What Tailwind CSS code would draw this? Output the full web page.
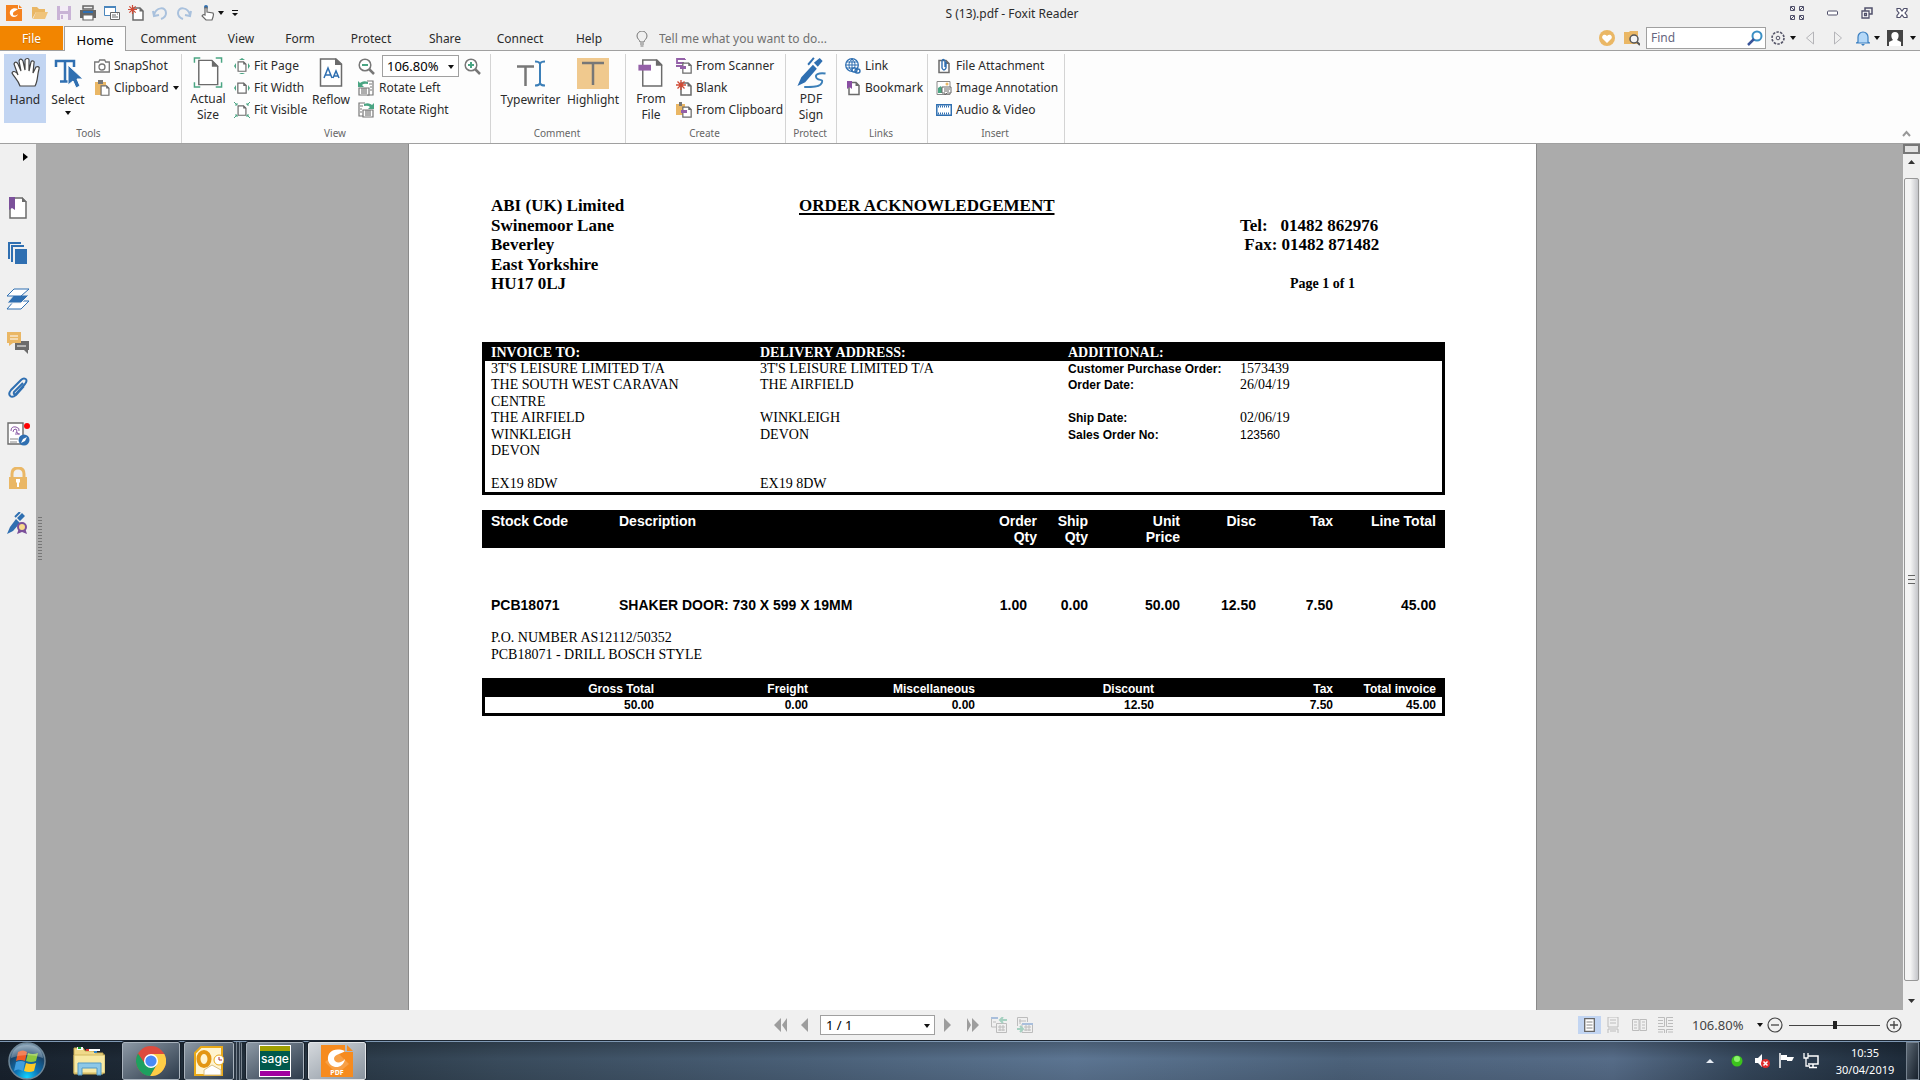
<!DOCTYPE html>
<html lang="en">
<head>
<meta charset="utf-8">
<meta name="viewport" content="width=device-width, initial-scale=1">
<title>S (13).pdf - Foxit Reader</title>
<script src="https://cdn.jsdelivr.net/npm/@tailwindcss/browser@4"></script>
</head>
<body class="flex h-screen flex-col overflow-hidden bg-[#f0f0f0] font-['Noto_Sans',sans-serif] text-[12px] leading-4 text-[#2b2b2b]">

<!-- Reusable symbols -->
<svg class="hidden" aria-hidden="true">
  <symbol id="caret" viewBox="0 0 6 4"><path d="M0 0h6L3 4z" fill="#111"/></symbol>
  <symbol id="sheet" viewBox="0 0 12 14"><path d="M1 1h7l3 3v9H1z" fill="#fff" stroke="#6b6b6b" stroke-width="1.5"/><path d="M7.500 .5L11.500 4.500h-4z" fill="#6b6b6b"/></symbol>
  <symbol id="burst" viewBox="0 0 10 10"><path d="M5 0v10M0 5h10M1.500 1.500l7 7M8.500 1.500l-7 7" stroke="#d04a35" stroke-width="1.300"/></symbol>
</svg>

<!-- Title bar -->
<header class="flex h-[26px] shrink-0 items-center">
  <div class="flex w-[240px] shrink-0 items-center gap-2 pl-[6px] [&>*]:shrink-0">
    <svg class="size-4" viewBox="0 0 16 16"><path d="M0 0h12v4h4v12H0z" fill="#f5821f"/><path d="M13 0l3 3h-3z" fill="#f5821f"/><path d="M12 4C7 2 3 5 4 9c1 4 7 4 8 0-2 2-5 2-5 0 0-3 3-3 5-5z" fill="#fff"/></svg>
    <button aria-label="Open" class="pl-[2px]"><svg class="size-4" viewBox="0 0 16 16"><path d="M0 2h5l2 2h6v3H4L0 14z" fill="#eab765"/><path d="M4 7h12l-3 7H1z" fill="#f0c47c"/></svg></button>
    <button aria-label="Save"><svg class="size-4" viewBox="0 0 16 16"><path d="M1 1h14v14H1z" fill="#c9b3d6"/><path d="M4 1h8v5H4zM4 9h8v6H4z" fill="#f3edf6"/><path d="M5 10h2v4H5z" fill="#c9b3d6"/></svg></button>
    <button aria-label="Print"><svg class="size-4" viewBox="0 0 16 16"><path d="M3 1h10v3H3z" fill="none" stroke="#666" stroke-width="1.500"/><path d="M0 5h16v8H0z" fill="#666"/><path d="M3 7h10" stroke="#2f6fb1" stroke-width="2"/><path d="M3 10h10v5H3z" fill="#fff" stroke="#666" stroke-width="1.200"/></svg></button>
    <button aria-label="Email"><svg class="size-4" viewBox="0 0 16 16"><path d="M.5 1.500h11v9H.5z" fill="#fff" stroke="#4a86bd"/><path d="M0 1h12v2H0z" fill="#4a86bd"/><path d="M6.500 7.500h9v7h-9z" fill="#fff" stroke="#666"/><path d="M8 10h4M8 12h6M13 9h1" stroke="#666"/></svg></button>
    <button aria-label="New"><svg class="size-4" viewBox="0 0 16 16"><use href="#sheet" x="4" y="2" width="12" height="14"/><use href="#burst" width="9" height="9"/></svg></button>
    <button aria-label="Undo"><svg class="size-4" viewBox="0 0 16 16"><path d="M1 6l1 5 5-1M2 10C4 2 14 1 14 8c0 3-2 5-5 6" fill="none" stroke="#a9c1dd" stroke-width="2"/></svg></button>
    <button aria-label="Redo"><svg class="size-4" viewBox="0 0 16 16"><path d="M15 6l-1 5-5-1M14 10C12 2 2 1 2 8c0 3 2 5 5 6" fill="none" stroke="#a9c1dd" stroke-width="2"/></svg></button>
    <button aria-label="Touch mode" class="flex items-center gap-[2px]"><svg class="size-4" viewBox="0 0 16 16"><circle cx="6" cy="2" r="2" fill="#2f6fb1"/><path d="M5 10V3q1-1 2 0v4l6 1q1 1 0 4l-1 3H6L2 11q1-2 3-1z" fill="#fff" stroke="#666" stroke-width="1.200"/></svg><svg class="h-[4px] w-[6px]"><use href="#caret"/></svg></button>
    <button aria-label="Customize"><svg class="h-[6px] w-[6px]" viewBox="0 0 6 6"><path d="M0 0h6v1H0zM0 3h6L3 6z" fill="#111"/></svg></button>
  </div>
  <h1 class="min-w-0 grow pt-px text-center">S (13).pdf - Foxit Reader</h1>
  <div class="flex w-[136px] shrink-0 items-center justify-between pr-[12px] pl-[6px]">
    <button aria-label="Full screen"><svg class="h-[14px] w-[14px]" viewBox="0 0 14 14"><path d="M.5.5h4v4h-4zM9.500.5h4v4h-4zM.5 9.500h4v4h-4zM9.500 9.500h4v4h-4zM1 1l3 3M13 1l-3 3M13 13l-3-3M1 13l3-3" fill="none" stroke="#50506b"/></svg></button>
    <button aria-label="Minimize"><svg class="h-[14px] w-[12px]" viewBox="0 0 12 14"><rect x=".5" y="5" width="10" height="4" rx="1" fill="#fff" stroke="#50506b"/></svg></button>
    <button aria-label="Restore"><svg class="h-[12px] w-[12px]" viewBox="0 0 12 12"><path d="M4 4V1h7v6H8" fill="none" stroke="#50506b" stroke-width="1.500"/><path d="M1 4h7v7H1zM3.500 6.500h2v2h-2z" fill="#fff" stroke="#50506b" stroke-width="1.300"/></svg></button>
    <button aria-label="Close"><svg class="h-[12px] w-[12px]" viewBox="0 0 12 12"><path d="M1 1.500h3l2 2.500 2-2.500h3v2L9 6l2 2.500v2H8L6 8l-2 2.500H1v-2L3 6 1 3.500z" fill="#fff" stroke="#50506b" stroke-width="1.200"/></svg></button>
  </div>
</header>

<!-- Ribbon tabs -->
<nav class="flex h-[25px] shrink-0 border-b border-[#a0a0a0]">
  <button class="mr-px w-[63px] bg-[#f28500] pt-[2px] text-white text-shadow-xs">File</button>
  <button class="z-10 -mb-px w-[62px] border border-b-0 border-[#a0a0a0] bg-[#fdfdfd] pt-px text-[13px] text-black">Home</button>
  <button class="w-[85px] pt-[2px]">Comment</button>
  <button class="w-[60px] pt-[2px]">View</button>
  <button class="w-[58px] pt-[2px]">Form</button>
  <button class="w-[84px] pt-[2px]">Protect</button>
  <button class="w-[64px] pt-[2px]">Share</button>
  <button class="w-[86px] pt-[2px]">Connect</button>
  <button class="w-[52px] pt-[2px]">Help</button>
  <label class="ml-[21px] flex items-center gap-[11px] pt-[2px]">
    <svg class="h-4 w-3" viewBox="0 0 12 16"><path d="M4 11c0-2-3-3-3-6a5 5 0 0 1 10 0c0 3-3 4-3 6zM4 13h4M4.500 15h3" fill="none" stroke="#777"/></svg>
    <input class="w-[200px] bg-transparent outline-none placeholder:text-[#707070]" placeholder="Tell me what you want to do..." aria-label="Tell me what you want to do">
  </label>
  <div class="ml-auto flex shrink-0 items-center pr-[4px]">
    <button aria-label="Favorites" class="mr-[9px]"><svg class="size-4" viewBox="0 0 16 16"><circle cx="8" cy="8" r="8" fill="#eab765"/><path d="M8 13L3.500 8.500C2 6 5.500 3 8 6c2.500-3 6 0 4.500 2.500z" fill="#fff"/></svg></button>
    <button aria-label="Search folder" class="mr-[6px]"><svg class="size-4" viewBox="0 0 16 16"><path d="M0 2h5l1-1h8v13H0z" fill="#eab765"/><circle cx="10" cy="9" r="4" fill="#f4f4f4" stroke="#555" stroke-width="1.500"/><path d="M13 12l3 3" stroke="#555" stroke-width="2"/></svg></button>
    <label class="mr-[5px] flex h-[22px] w-[120px] items-center border border-[#a0a0a0] bg-white pr-[2px] pl-1">
      <input class="min-w-0 grow outline-none placeholder:text-[#666680]" placeholder="Find" aria-label="Find">
      <svg class="size-4 shrink-0" viewBox="0 0 16 16"><circle cx="10" cy="6" r="4.500" fill="#fff" stroke="#3a8fc4" stroke-width="2"/><path d="M7 9l-6 6" stroke="#3a559a" stroke-width="2.500"/></svg>
    </label>
    <button aria-label="Settings" class="mr-[10px] flex items-center gap-[5px]"><svg class="size-[14px]" viewBox="0 0 14 14"><circle cx="7" cy="7" r="6" fill="none" stroke="#555568" stroke-width="1.600" stroke-dasharray="2.500 1.200"/><circle cx="7" cy="7" r="1.800" fill="none" stroke="#555568"/></svg><svg class="h-[4px] w-[6px]"><use href="#caret"/></svg></button>
    <button aria-label="Previous" class="mr-5"><svg class="h-[14px] w-2" viewBox="0 0 8 14"><path d="M7.500 1v12L.5 7z" fill="none" stroke="#b4b4b8"/></svg></button>
    <button aria-label="Next" class="mr-[14px]"><svg class="h-[14px] w-2" viewBox="0 0 8 14"><path d="M.5 1v12l7-6z" fill="none" stroke="#b4b4b8"/></svg></button>
    <button aria-label="Notifications" class="mr-[7px] flex items-center gap-1"><svg class="h-4 w-[14px]" viewBox="0 0 14 16"><path d="M2 12V7a5 5 0 0 1 10 0v5l1.500 1H.5z" fill="#b4d8f8" stroke="#3b7fc0" stroke-width="1.200"/><path d="M5 14h4l-2 2z" fill="#3b7fc0"/></svg><svg class="h-[4px] w-[6px]"><use href="#caret"/></svg></button>
    <button aria-label="Account" class="flex items-center gap-[7px]"><svg class="size-4" viewBox="0 0 16 16"><path d="M0 0h16v16H0z" fill="#444"/><path d="M8 2c5 0 4 6 2 8l4 2v4H2v-4l4-2C4 8 3 2 8 2z" fill="#fff"/></svg><svg class="h-[4px] w-[6px]"><use href="#caret"/></svg></button>
  </div>
</nav>

<!-- Ribbon -->
<section class="flex h-[93px] shrink-0 border-b border-[#a0a0a0] bg-[#fdfdfd] pt-[3px]">
  <div class="w-[182px] shrink-0 border-r border-[#d4d4d4]">
    <div class="flex h-[69px]">
      <button class="ml-1 flex w-[42px] flex-col items-center gap-[3px] bg-[#c2d5f2] pt-[3px]">
        <svg class="size-8" viewBox="0 0 32 32"><path d="M11 29C9 23 5 20 3 16c1-3 5-1 6 2L5 7c1-3 3-2 4 0l3 7-2-10c1-3 3-2 4 0l2 9V3c1-2 4-2 4 0v11l2-9c1-2 4-1 3 1l-1 10 1-2 2-4c2-1 4 0 3 2-2 7-1 12-4 17z" fill="#fff" stroke="#444" stroke-width="1.200"/></svg>
        <span>Hand</span></button>
      <button class="ml-px flex w-[42px] flex-col items-center gap-[3px] pt-[3px]">
        <svg class="size-8" viewBox="0 0 32 32"><path d="M4 10V4h18v6M13 4v20M8 24.500h9" fill="none" stroke="#2f6fb1" stroke-width="2.500"/><path d="M16 8v20l5-4 3 7 4-2-3-7h6z" fill="#2f6fb1" stroke="#fdfdfd"/></svg>
        <span>Select</span><svg class="h-[4px] w-[6px]"><use href="#caret"/></svg></button>
      <div class="ml-[5px] pt-px">
        <button class="flex h-[22px] items-center gap-1"><svg class="size-4" viewBox="0 0 16 16"><path d="M.7 4h4l1-2h5l1 2h3.600v10H.7z" fill="#fff" stroke="#777" stroke-width="1.300"/><circle cx="8" cy="9" r="3" fill="none" stroke="#777" stroke-width="1.300"/></svg>SnapShot</button>
        <button class="flex h-[22px] items-center gap-1"><svg class="size-4" viewBox="0 0 16 16"><path d="M1 2h11v13H1z" fill="#eab765"/><path d="M4 0h5v4H4z" fill="#777"/><use href="#sheet" x="6" y="5" width="10" height="11"/></svg>Clipboard<svg class="h-[4px] w-[6px]"><use href="#caret"/></svg></button>
      </div>
    </div>
    <p class="pt-[2px] pr-1 text-center text-[10px] text-[#666]">Tools</p>
  </div>

  <div class="w-[309px] shrink-0 border-r border-[#d4d4d4]">
    <div class="flex h-[69px]">
      <button class="ml-1 flex w-[44px] flex-col items-center gap-[3px] pt-[3px]">
        <svg class="size-8" viewBox="0 0 32 32"><path d="M2 6V1h6M24 1h6v5M30 26v5h-6M8 31H2v-5" fill="none" stroke="#4aa583" stroke-width="1.500"/><path d="M6.500 3.500H20l6 6v19H6.500z" fill="#fff" stroke="#6b6b6b" stroke-width="1.500"/><path d="M20 3l7 7h-7z" fill="#6b6b6b"/></svg>
        <span>Actual<br>Size</span></button>
      <div class="ml-[4px] pt-px">
        <button class="flex h-[22px] items-center gap-1"><svg class="size-4" viewBox="0 0 16 16"><use href="#sheet" x="3" y="3" width="10" height="11"/><path d="M5 2h6L8 0zM5 15h6l-3 1.500zM2 5v6L0 8zM14 5v6l2-3z" fill="#4aa583"/></svg>Fit Page</button>
        <button class="flex h-[22px] items-center gap-1"><svg class="size-4" viewBox="0 0 16 16"><use href="#sheet" x="3" y="2" width="10" height="12"/><path d="M2 5v6L0 8zM14 5v6l2-3z" fill="#4aa583"/></svg>Fit Width</button>
        <button class="flex h-[22px] items-center gap-1"><svg class="size-4" viewBox="0 0 16 16"><use href="#sheet" x="3" y="3" width="10" height="11"/><path d="M0 0l3 3M3 1v2H1M16 0l-3 3M13 1v2h2M0 16l3-3M1 13h2v2M16 16l-3-3M15 13h-2v2" fill="none" stroke="#4aa583"/></svg>Fit Visible</button>
      </div>
      <button class="ml-auto flex w-[44px] flex-col items-center gap-[3px] pt-[3px]">
        <svg class="size-8" viewBox="0 0 32 32"><path d="M5.500 2H21l5.500 5v22h-21z" fill="#fff" stroke="#6b6b6b" stroke-width="1.500"/><path d="M20 1l7 7h-7z" fill="#6b6b6b"/><path d="M9 21l4-10 4 10M10 18h6M18 21l3-7 3 7M19 19h4" fill="none" stroke="#2f6fb1" stroke-width="1.500"/></svg>
        <span>Reflow</span></button>
      <div class="mr-[9px] ml-[5px] pt-px">
        <div class="flex h-[22px] items-center">
          <button aria-label="Zoom out"><svg class="size-[17px]" viewBox="0 0 17 17"><circle cx="7" cy="7" r="5.800" fill="#fff" stroke="#777" stroke-width="1.500"/><path d="M4 7h6" stroke="#4aa583" stroke-width="2"/><path d="M11 11l5 5" stroke="#777" stroke-width="2.500"/></svg></button>
          <div class="relative ml-[7px] h-[22px] w-[77px] border border-[#a0a0a0] bg-white"><select aria-label="Zoom level" class="size-full appearance-none pl-[4px] text-[13px] text-black"><option>106.80%</option></select><svg class="pointer-events-none absolute top-[9px] right-[4px] h-[4px] w-[6px]"><use href="#caret"/></svg></div>
          <button aria-label="Zoom in" class="ml-[5px]"><svg class="size-[17px]" viewBox="0 0 17 17"><circle cx="7" cy="7" r="5.800" fill="#fff" stroke="#777" stroke-width="1.500"/><path d="M4 7h6M7 4v6" stroke="#4aa583" stroke-width="2"/><path d="M11 11l5 5" stroke="#777" stroke-width="2.500"/></svg></button>
        </div>
        <button class="flex h-[22px] items-center gap-[5px]"><svg class="size-4" viewBox="0 0 16 16"><path d="M9 1h6v14H9M11 4h3M12 7h2M12 10h2" fill="#fff" stroke="#777" stroke-width="1.200"/><path d="M1 8h10v7H1zM4 8v6M6 8v6M8 8v6" fill="#fff" stroke="#777" stroke-width="1.200"/><path d="M10 2C6 0 3 2 2 3L0 1v6h6L4 5q2-2 6-1z" fill="#4aa583"/></svg>Rotate Left</button>
        <button class="flex h-[22px] items-center gap-[5px]"><svg class="size-4" viewBox="0 0 16 16"><path d="M7 1H1v13h6M2 4h3M2 7h2M2 10h2" fill="#fff" stroke="#777" stroke-width="1.200"/><path d="M5 8h10v7H5zM8 8v6M10 8v6M12 8v6" fill="#fff" stroke="#777" stroke-width="1.200"/><path d="M6 2c4-2 7 0 8 1l2-2v6h-6l2-2q-2-2-6-1z" fill="#4aa583"/></svg>Rotate Right</button>
      </div>
    </div>
    <p class="pt-[2px] pr-[2px] text-center text-[10px] text-[#666]">View</p>
  </div>

  <div class="w-[135px] shrink-0 border-r border-[#d4d4d4]">
    <div class="flex h-[69px]">
      <button class="ml-1 flex w-[71px] flex-col items-center gap-[3px] pt-[3px]">
        <svg class="size-8" viewBox="0 0 32 32"><path d="M2 9.500h17M10.500 9v20" stroke="#777" stroke-width="2.500"/><path d="M20 4.500q4 0 5 2 1-2 5-2M20 28.500q4 0 5-2 1 2 5 2M25 6v21" fill="none" stroke="#3c7fb8" stroke-width="2"/></svg>
        <span>Typewriter</span></button>
      <button class="flex w-[54px] flex-col items-center gap-[3px] pt-[3px]">
        <svg class="size-8" viewBox="0 0 32 32"><path d="M0 1h32v31H0z" fill="#f0c98e"/><path d="M5 6h22M16 6v22" stroke="#777" stroke-width="2.500"/></svg>
        <span>Highlight</span></button>
    </div>
    <p class="pt-[2px] pr-[2px] text-center text-[10px] text-[#666]">Comment</p>
  </div>

  <div class="w-[160px] shrink-0 border-r border-[#d4d4d4]">
    <div class="flex h-[69px]">
      <button class="ml-1 flex w-[42px] flex-col items-center gap-[3px] pt-[3px]">
        <svg class="size-8" viewBox="0 0 32 32"><path d="M7.500 3H22l5 5v22H7.500z" fill="#fff" stroke="#6b6b6b" stroke-width="1.500"/><path d="M21 2l7 7h-7z" fill="#6b6b6b"/><path d="M3 8h13v6H3z" fill="#9460a8"/></svg>
        <span>From<br>File</span></button>
      <div class="ml-[4px] pt-px">
        <button class="flex h-[22px] items-center gap-1"><svg class="size-4" viewBox="0 0 16 16"><path d="M9 1H1v4h7M0 8h7M9 1v1" fill="none" stroke="#9460a8" stroke-width="1.800"/><use href="#sheet" x="6" y="4" width="10" height="12"/><path d="M4 8h6v3H4z" fill="#9460a8"/></svg>From Scanner</button>
        <button class="flex h-[22px] items-center gap-1"><svg class="size-4" viewBox="0 0 16 16"><use href="#sheet" x="4" y="2" width="12" height="14"/><use href="#burst" width="10" height="10"/></svg>Blank</button>
        <button class="flex h-[22px] items-center gap-1"><svg class="size-4" viewBox="0 0 16 16"><path d="M0 2h9v11H0z" fill="#eab765"/><path d="M3 0h3v4H3z" fill="#777"/><use href="#sheet" x="6" y="4" width="10" height="12"/><path d="M5 8h6v3H5z" fill="#9460a8"/></svg>From Clipboard</button>
      </div>
    </div>
    <p class="pt-[2px] pr-[2px] text-center text-[10px] text-[#666]">Create</p>
  </div>

  <div class="w-[51px] shrink-0 border-r border-[#d4d4d4]">
    <button class="flex h-[69px] w-full flex-col items-center gap-[3px] pt-[3px]">
      <svg class="size-8" viewBox="0 0 32 32"><path d="M25 1l3 3-5 6-4-4zM18 8l4 4-12 14-8 4 4-9z" fill="#2f6fb1"/><path d="M19 1l-6 7" stroke="#2f6fb1" stroke-width="2"/><path d="M31 17c-7-1-12 1-9 5 3 3 7 0 5 5s-13 4-18 4" fill="none" stroke="#3c7fb8" stroke-width="2"/></svg>
      <span>PDF<br>Sign</span></button>
    <p class="pt-[2px] pr-[2px] text-center text-[10px] text-[#666]">Protect</p>
  </div>

  <div class="w-[91px] shrink-0 border-r border-[#d4d4d4]">
    <div class="h-[69px] pt-px pl-[8px]">
      <button class="flex h-[22px] items-center gap-1"><svg class="size-4" viewBox="0 0 16 16"><circle cx="7" cy="7" r="6.300" fill="#fff" stroke="#2f6fb1" stroke-width="1.300"/><path d="M1 7h12M7 1v12M2 4h10M2 10h8M7 1C3 4 3 10 7 13M7 1c4 3 4 9 0 12" fill="none" stroke="#2f6fb1"/><rect x="7" y="10" width="5" height="4" rx="2" fill="#fff" stroke="#2f6fb1" stroke-width="1.400"/><rect x="10" y="11" width="5" height="4" rx="2" fill="none" stroke="#2f6fb1" stroke-width="1.400"/></svg>Link</button>
      <button class="flex h-[22px] items-center gap-1"><svg class="size-4" viewBox="0 0 16 16"><use href="#sheet" x="3" y="1" width="12" height="15"/><path d="M2 1h5v8L4.500 7 2 9z" fill="#8a4fa3"/></svg>Bookmark</button>
    </div>
    <p class="pt-[2px] pr-[2px] text-center text-[10px] text-[#666]">Links</p>
  </div>

  <div class="w-[137px] shrink-0 border-r border-[#d4d4d4]">
    <div class="h-[69px] pt-px pl-[8px]">
      <button class="flex h-[22px] items-center gap-1"><svg class="size-4" viewBox="0 0 16 16"><use href="#sheet" x="2" y="1" width="12" height="15"/><path d="M10 4v6q-2 4-4 0V3q1-3 3 0v6" fill="none" stroke="#2f6fb1" stroke-width="1.400"/></svg>File Attachment</button>
      <button class="flex h-[22px] items-center gap-1"><svg class="size-4" viewBox="0 0 16 16"><path d="M1 1.500h13v13H1z" fill="#fff" stroke="#888"/><path d="M2 13V8l3-2 3 7z" fill="#4aa583"/><circle cx="11" cy="4" r="1.500" fill="#eab765"/><path d="M6 7h9v6h-4l-2 2v-2H6z" fill="#fff" stroke="#666"/><path d="M8 9h6M8 11h5" stroke="#666"/></svg>Image Annotation</button>
      <button class="flex h-[22px] items-center gap-1"><svg class="size-4" viewBox="0 0 16 16"><path d="M.8 2.800h14.500v10.400H.8z" fill="#fff" stroke="#2f6fb1" stroke-width="1.500"/><path d="M2 4.500h12M2 11.500h12" stroke="#2f6fb1" stroke-width="1.800" stroke-dasharray="1 1"/></svg>Audio &amp; Video</button>
    </div>
    <p class="pt-[2px] pr-[2px] text-center text-[10px] text-[#666]">Insert</p>
  </div>
  <button aria-label="Collapse ribbon" class="mt-auto mr-[9px] mb-[6px] ml-auto"><svg class="h-[7px] w-[9px]" viewBox="0 0 9 7"><path d="M1 6l3.500-4L8 6" fill="none" stroke="#999" stroke-width="2"/></svg></button>
</section>

<!-- Work area -->
<main class="flex min-h-0 grow bg-[#ababab]">
  <aside class="flex w-[36px] shrink-0 flex-col items-center gap-[23px] bg-[#f0f0f0] pt-[8px]">
    <button aria-label="Expand panel" class="-mb-px flex h-[23px] w-full items-start justify-end pt-px pr-[8px]"><svg class="h-[8px] w-[5px]" viewBox="0 0 5 8"><path d="M0 0v8l5-4z" fill="#000"/></svg></button>
    <button aria-label="Bookmarks" class="h-[22px]"><svg class="size-[22px]" viewBox="0 0 22 22"><path d="M3 1h12l4 4v16H3z" fill="#fff" stroke="#6b6b6b" stroke-width="1.500"/><path d="M15 0l5 5h-5z" fill="#6b6b6b"/><path d="M2 0h6v13l-3-2-3 2z" fill="#7b509a"/></svg></button>
    <button aria-label="Pages" class="h-[22px]"><svg class="size-[22px]" viewBox="0 0 22 22"><path d="M2 17V1h12M5 20V4h12" fill="none" stroke="#2f6fb1" stroke-width="2"/><path d="M8 7h12v15H8z" fill="#2f6fb1"/></svg></button>
    <button aria-label="Layers" class="h-[22px]"><svg class="size-[24px]" viewBox="0 0 24 22"><path d="M8 13h15l-8 8H1z" fill="#fff" stroke="#2f6fb1"/><path d="M8 7h15l-8 8H1z" fill="#2f6fb1" stroke="#f0f0f0"/><path d="M8 1h15l-8 7H1z" fill="#fff" stroke="#2f6fb1"/></svg></button>
    <button aria-label="Comments" class="h-[22px]"><svg class="size-[22px]" viewBox="0 0 22 22"><path d="M8 9h14v9h-1v4l-4-4H8z" fill="#6b6b6b"/><path d="M0 0h14v11H6l-4 3v-3H0z" fill="#eab765"/><path d="M3 4h8M3 7h8M10 14h9" stroke="#fff" stroke-width="1.200"/></svg></button>
    <button aria-label="Attachments" class="h-[22px]"><svg class="size-[22px]" viewBox="0 0 22 22"><path d="M16 6l-9 9q-1 3 2 2l9-10c4-5-1-7-4-4L4 13c-4 5 0 9 5 5l8-9" fill="none" stroke="#2f6fb1" stroke-width="2"/></svg></button>
    <button aria-label="Digital signatures" class="h-[22px]"><svg class="size-[24px]" viewBox="0 0 24 24"><path d="M2 1h15v21H2z" fill="#fff" stroke="#6b6b6b" stroke-width="1.400"/><path d="M5 9q0-5 5-4 4 1 3 4M7 10q0-3 3-3 2 2 0 4M9 12h5M11 10q0 2 2 2" fill="none" stroke="#8a5aa5"/><path d="M4 17h8M4 20h7" stroke="#888"/><circle cx="18" cy="18" r="5.500" fill="#2f6fb1"/><path d="M15 21l2-4 4-2-2 4z" fill="#fff"/><circle cx="21" cy="4" r="3" fill="#f00"/></svg></button>
    <button aria-label="Security" class="h-[22px]"><svg class="size-[22px]" viewBox="0 0 22 22"><path d="M5 11V7q0-6 6-6t6 6v4" fill="none" stroke="#eab765" stroke-width="3"/><path d="M2 10h18v12H2z" fill="#eab765"/><path d="M9 12h4v3l-1 1v4h-2v-4l-1-1z" fill="#fff"/></svg></button>
    <button aria-label="Signatures" class="h-[22px]"><svg class="size-[22px]" viewBox="0 0 22 22"><path d="M15 1l3 3-5 5-3-3zM9 7l4 4-7 8-6 3 3-7z" fill="#2f6fb1"/><path d="M13 0L8 5" stroke="#2f6fb1" stroke-width="2"/><path d="M12 16l-2 6 5-2 5 2-2-6z" fill="#7b509a"/><circle cx="15" cy="15" r="4" fill="#f8d98b" stroke="#7b509a" stroke-width="2"/></svg></button>
  </aside>
  <div class="flex w-[6px] shrink-0 items-center pl-[2px]"><div class="mb-[76px] h-[44px] w-[4px] bg-[repeating-linear-gradient(to_bottom,#777_0_1px,#ababab_1px_3px)]"></div></div>

  <div class="flex grow justify-center overflow-hidden">
    <article class="w-[1129px] shrink-0 border-x border-[#8a8a8a] bg-white pt-[52px] pr-[91px] pl-[73px] font-['Liberation_Serif',serif] text-[14px] text-black">
      <header class="grid h-[98px] grid-cols-[308px_441px_1fr] pl-[9px] text-[17px] leading-[19px] font-bold">
        <address class="grid grid-rows-5 not-italic"><span>ABI (UK) Limited</span><span>Swinemoor Lane</span><span>Beverley</span><span>East Yorkshire</span><span>HU17 0LJ</span></address>
        <h2 class="underline decoration-2 underline-offset-2">ORDER ACKNOWLEDGEMENT</h2>
        <div class="grid grid-rows-5 whitespace-pre"><span></span><span>Tel:   01482 862976</span><span> Fax: 01482 871482</span><span></span><span class="pl-[50px] text-[14px]">Page 1 of 1</span></div>
      </header>

      <section class="mt-[48px] border-[3px] border-black">
        <div class="grid grid-cols-[269px_308px_1fr] bg-black pl-[6px] font-bold text-white"><h3>INVOICE TO:</h3><h3>DELIVERY ADDRESS:</h3><h3>ADDITIONAL:</h3></div>
        <div class="grid h-[131px] grid-cols-[269px_308px_1fr] pl-[6px] whitespace-nowrap">
          <address class="grid grid-rows-8 not-italic"><span>3T'S LEISURE LIMITED T/A</span><span>THE SOUTH WEST CARAVAN</span><span>CENTRE</span><span>THE AIRFIELD</span><span>WINKLEIGH</span><span>DEVON</span><span></span><span>EX19 8DW</span></address>
          <address class="grid grid-rows-8 not-italic"><span>3T'S LEISURE LIMITED T/A</span><span>THE AIRFIELD</span><span></span><span>WINKLEIGH</span><span>DEVON</span><span></span><span></span><span>EX19 8DW</span></address>
          <dl class="grid grid-cols-[172px_1fr] grid-rows-8 [&>dt]:font-['Liberation_Sans',sans-serif] [&>dt]:text-[12px] [&>dt]:font-bold">
            <dt>Customer Purchase Order:</dt><dd>1573439</dd>
            <dt>Order Date:</dt><dd>26/04/19</dd>
            <dt class="row-start-4">Ship Date:</dt><dd class="row-start-4">02/06/19</dd>
            <dt class="row-start-5">Sales Order No:</dt><dd class="row-start-5 font-['Liberation_Sans',sans-serif] text-[12px]">123560</dd>
          </dl>
        </div>
      </section>

      <table class="mt-[15px] w-full table-fixed font-['Liberation_Sans',sans-serif] font-bold">
        <colgroup><col class="w-[137px]"><col><col class="w-[63px]"><col class="w-[51px]"><col class="w-[92px]"><col class="w-[76px]"><col class="w-[77px]"><col class="w-[112px]"></colgroup>
        <thead class="bg-black text-right align-top text-white">
          <tr class="h-[38px]"><th class="pt-[3px] pl-[9px] text-left">Stock Code</th><th class="pt-[3px] text-left">Description</th><th class="pt-[3px]">Order<br>Qty</th><th class="pt-[3px]">Ship<br>Qty</th><th class="pt-[3px]">Unit<br>Price</th><th class="pt-[3px]">Disc</th><th class="pt-[3px]">Tax</th><th class="pt-[3px] pr-[9px]">Line Total</th></tr>
        </thead>
        <tbody class="text-right">
          <tr><td class="pt-[49px] pl-[9px] text-left">PCB18071</td><td class="pt-[49px] text-left">SHAKER DOOR: 730 X 599 X 19MM</td><td class="pt-[49px] pr-[10px]">1.00</td><td class="pt-[49px]">0.00</td><td class="pt-[49px]">50.00</td><td class="pt-[49px]">12.50</td><td class="pt-[49px]">7.50</td><td class="pt-[49px] pr-[9px]">45.00</td></tr>
        </tbody>
      </table>
      <p class="mt-4 pl-[9px] leading-[17px]">P.O. NUMBER AS12112/50352<br>PCB18071 - DRILL BOSCH STYLE</p>

      <div class="mt-[15px] border-[3px] border-black">
        <table class="w-full table-fixed text-right font-['Liberation_Sans',sans-serif] text-[12px] font-bold">
          <colgroup><col class="w-[169px]"><col class="w-[154px]"><col class="w-[167px]"><col class="w-[179px]"><col class="w-[179px]"><col></colgroup>
          <thead class="bg-black text-white"><tr><th>Gross Total</th><th>Freight</th><th>Miscellaneous</th><th>Discount</th><th>Tax</th><th class="pr-[6px]">Total invoice</th></tr></thead>
          <tbody><tr><td>50.00</td><td>0.00</td><td>0.00</td><td>12.50</td><td>7.50</td><td class="pr-[6px]">45.00</td></tr></tbody>
        </table>
      </div>
    </article>
  </div>

  <div class="flex w-[17px] shrink-0 flex-col bg-[#f0f0f0]">
    <div class="h-[10px] border-2 border-[#777] bg-[#e2e2e2]"></div>
    <button aria-label="Scroll up" class="flex h-[24px] items-center justify-center pb-[8px]"><svg class="h-[4px] w-[7px]" viewBox="0 0 7 4"><path d="M0 4h7L3.500 0z" fill="#333"/></svg></button>
    <div class="mx-px flex grow items-center justify-center rounded-xs border border-[#979797] bg-linear-to-r from-[#f5f5f5] from-40% to-[#c4c5c9]"><div class="h-[9px] w-[7px] bg-[repeating-linear-gradient(to_bottom,#666_0_1px,#ececec_1px_4px)]"></div></div>
    <button aria-label="Scroll down" class="flex h-[29px] items-center justify-center pt-[11px]"><svg class="h-[4px] w-[7px]" viewBox="0 0 7 4"><path d="M0 0h7L3.500 4z" fill="#333"/></svg></button>
  </div>
</main>

<!-- Status bar -->
<footer class="flex h-[30px] shrink-0 items-center bg-[#f0f0f0]">
  <div class="flex grow-[774]"></div>
  <div class="flex items-center">
    <button aria-label="First page" class="mr-[14px]"><svg class="h-[14px] w-[13px]" viewBox="0 0 13 14"><path d="M7 0v14L0 7zM13 0v14L8 7z" fill="#9d9d9d"/></svg></button>
    <button aria-label="Previous page" class="mr-[12px]"><svg class="h-[14px] w-[7px]" viewBox="0 0 7 14"><path d="M7 0v14L0 7z" fill="#9d9d9d"/></svg></button>
    <div class="relative mr-[9px] h-[20px] w-[115px] border border-[#a0a0a0] bg-white"><select aria-label="Page" class="size-full appearance-none pl-[5px] text-[13px] text-black"><option>1 / 1</option></select><svg class="pointer-events-none absolute top-[8px] right-[4px] h-[4px] w-[6px]"><use href="#caret"/></svg></div>
    <button aria-label="Next page" class="mr-[16px]"><svg class="h-[14px] w-[7px]" viewBox="0 0 7 14"><path d="M0 0v14l7-7z" fill="#9d9d9d"/></svg></button>
    <button aria-label="Last page" class="mr-[12px]"><svg class="h-[14px] w-[12px]" viewBox="0 0 12 14"><path d="M0 0v14l4-7zM5 0v14l7-7z" fill="#9d9d9d"/></svg></button>
    <button aria-label="Previous view" class="mr-[10px]"><svg class="size-4" viewBox="0 0 16 16"><path d="M.5 1v9H5M5.500 6.500h10v9h-10zM7 10h7M7 13h7M9 8v6M12 8v6M2 5h3" fill="none" stroke="#bcbcbc"/><path d="M0 1h7" stroke="#a9bfdc" stroke-width="2"/><path d="M16 3h-6M12 0L9 3l3 3" fill="none" stroke="#a5d0c0" stroke-width="2"/></svg></button>
    <button aria-label="Next view"><svg class="size-4" viewBox="0 0 16 16"><path d="M.5 9V.5h10V5M5 7v8.500h10.500V6M2 4h7M7 10h7M7 13h7M9 8v6M12 8v6M3 2v5" fill="none" stroke="#bcbcbc"/><path d="M5 7h11" stroke="#a9bfdc" stroke-width="2"/><path d="M0 12h6M3 9l3 3-3 3" fill="none" stroke="#a5d0c0" stroke-width="2"/></svg></button>
  </div>
  <div class="flex grow-[545]"></div>
  <div class="flex items-center pr-[18px]">
    <button aria-label="Single page" class="mr-[6px] flex h-[18px] w-[23px] items-center justify-center bg-[#c2d5f2]"><svg class="h-[14px] w-[11px]" viewBox="0 0 11 14"><path d="M.7.7h9.600v12.600H.7z" fill="#fff" stroke="#666" stroke-width="1.300"/><path d="M2.500 4h6M2.500 7h6M2.500 10h6" stroke="#888"/></svg></button>
    <button aria-label="Continuous" class="mr-[13px]"><svg class="h-[16px] w-[12px]" viewBox="0 0 12 16"><path d="M1 0v10h10V0zM1 16v-4h10v4M3 3h6M3 6h6M3 14h6" fill="none" stroke="#bcbcbc"/></svg></button>
    <button aria-label="Facing" class="mr-[11px]"><svg class="h-[16px] w-[15px]" viewBox="0 0 15 16"><path d="M.5 2.500h6.500v11H.5zM8 2.500h6.500v11H8zM2 5h3M2 8h3M2 11h3M10 5h3M10 8h3M10 11h3" fill="none" stroke="#bcbcbc"/></svg></button>
    <button aria-label="Continuous facing" class="mr-[19px]"><svg class="h-[16px] w-[15px]" viewBox="0 0 15 16"><path d="M0 .5h6.500v9H0M15 .5H8.500v9H15M0 12.500h6.500V16M15 12.500H8.500V16M0 3.500h5M0 6.500h5M10 3.500h5M10 6.500h5M0 15h5M10 15h5" fill="none" stroke="#bcbcbc"/></svg></button>
    <button class="flex w-[71px] items-center justify-between text-[13px] text-[#444]">106.80%<svg class="h-[4px] w-[6px]"><use href="#caret"/></svg></button>
    <button aria-label="Zoom out" class="ml-[4px]"><svg class="size-4" viewBox="0 0 16 16"><circle cx="8" cy="8" r="7" fill="none" stroke="#444" stroke-width="1.200"/><path d="M4 8h8" stroke="#444" stroke-width="1.300"/></svg></button>
    <input type="range" aria-label="Zoom" value="51" class="mx-[6px] h-[8px] w-[91px] appearance-none bg-[linear-gradient(to_bottom,transparent_4px,#444_4px_5px,transparent_5px)] [&::-webkit-slider-thumb]:h-[8px] [&::-webkit-slider-thumb]:w-[4px] [&::-webkit-slider-thumb]:appearance-none [&::-webkit-slider-thumb]:bg-[#222]">
    <button aria-label="Zoom in"><svg class="size-4" viewBox="0 0 16 16"><circle cx="8" cy="8" r="7" fill="none" stroke="#444" stroke-width="1.200"/><path d="M4 8h8M8 4v8" stroke="#444" stroke-width="1.300"/></svg></button>
  </div>
</footer>

<!-- Windows taskbar -->
<footer class="flex h-[40px] shrink-0 items-center border-t border-[#1d2733] bg-[linear-gradient(to_bottom,#7f98b3_0_1px,transparent_1px_100%),linear-gradient(to_bottom,#00000038,transparent_45%,#00000018),linear-gradient(to_right,#18222e,#24323f_14%,#394b5c_26%,#4a6078_42%,#5c7592_56%,#4c627b_70%,#566c88_84%,#34465a_91%,#1c2937_100%)] text-[11px] text-white">
  <button aria-label="Start" class="ml-[8px]"><svg class="size-[38px]" viewBox="0 0 38 38"><defs><radialGradient id="orb" cx=".5" cy=".95" r=".95"><stop offset="0" stop-color="#12d4ff"/><stop offset=".35" stop-color="#0d72b5"/><stop offset=".7" stop-color="#194469"/><stop offset="1" stop-color="#8fa9bd"/></radialGradient></defs><circle cx="19" cy="19" r="18" fill="url(#orb)" stroke="#6f8798" stroke-width="1.500"/><path d="M10 10q5-3 9 0l-2 9q-5-2-9 0z" fill="#ec5a25"/><path d="M20 11q5 2 10 0l-2 8q-5 2-10 0z" fill="#8ec63f"/><path d="M8 20q5-2 9 0l-2 9q-5-3-9 0z" fill="#3f9ddf"/><path d="M18 21q5 2 10 0l-2 8q-5 2-10 0z" fill="#fdc928"/><path d="M3 16Q5 3 19 3t16 13q-16-6-32 0z" fill="#fff" opacity=".25"/></svg></button>
  <button aria-label="Explorer" class="ml-[27px]"><svg class="size-8" viewBox="0 0 32 32"><path d="M1 3h9l2 3h8l2 2h8v21H1z" fill="#efd98a" stroke="#c7a94f"/><path d="M4 2h6v3H4z" fill="#fff"/><path d="M5 3h3" stroke="#1ca52f" stroke-width="2"/><path d="M13 5h14" stroke="#fff" stroke-width="2"/><path d="M13 5h3" stroke="#d33" stroke-width="2"/><path d="M21 7h3" stroke="#38c" stroke-width="2"/><path d="M1 10h31v18H1z" fill="#f7e9a5" stroke="#d2b860"/><path d="M5 18h23v12h-4v-7H9v7H5z" fill="#8cc8e8" stroke="#5299c5"/></svg></button>
  <button aria-label="Chrome" class="ml-[17px] flex h-[38px] w-[58px] items-center justify-center rounded-xs border border-[#a9b3bd] bg-linear-to-br from-[#8d99a5] to-[#2e3c4c] outline outline-[#17202b]"><svg class="size-[30px]" viewBox="0 0 30 30"><circle cx="15" cy="15" r="15" fill="#dd4b3e"/><path d="M15 8h13.300A15 15 0 0 1 14 30l7-12z" fill="#fecd46"/><path d="M8.500 17L2 7.500A15 15 0 0 0 14 30l7-12z" fill="#1da05f"/><circle cx="15" cy="15" r="7" fill="#fff"/><circle cx="15" cy="15" r="5.600" fill="#4a8af4"/></svg></button>
  <button aria-label="Outlook" class="ml-[4px] flex h-[38px] w-[50px] items-center justify-center rounded-xs border border-[#a9b3bd] bg-linear-to-br from-[#8d99a5] to-[#2e3c4c] outline outline-[#17202b]"><svg class="size-[30px]" viewBox="0 0 30 30"><path d="M7 1h21v28H1V7z" fill="#fff4cf" stroke="#e9a918" stroke-width="2"/><path d="M10 24l8-5 9 5v5H10z" fill="#fff" stroke="#d9bf85"/><ellipse cx="10" cy="13" rx="5.500" ry="7" fill="none" stroke="#e39613" stroke-width="4"/><circle cx="25" cy="14" r="5" fill="#fff" stroke="#e9a918"/><path d="M25 11v3h3" fill="none" stroke="#a33"/></svg></button>
  <div class="mr-[4px] h-[38px] w-[8px] rounded-r-xs border-r border-[#78838e] bg-[repeating-linear-gradient(to_right,#2a3643_0_2px,#75818d_2px_3px)]"></div>
  <button aria-label="Sage" class="flex h-[38px] w-[58px] items-center justify-center rounded-xs border border-[#a9b3bd] bg-linear-to-br from-[#8d99a5] to-[#2e3c4c] outline outline-[#17202b]"><span class="flex h-8 w-8 flex-col overflow-hidden border border-white bg-[#00594c]"><span class="h-[5px] bg-[#a0a000]"></span><span class="h-[19px] text-center font-['Inter',sans-serif] text-[12px] leading-4 font-medium">sage</span><span class="h-[6px] border-t border-white bg-[#a000a0]"></span></span></button>
  <button aria-label="Foxit Reader" class="ml-[4px] flex h-[38px] w-[58px] items-center justify-center rounded-xs border border-[#e2e5e8] bg-linear-to-br from-[#d5d9dd] to-[#8a949f] outline outline-[#17202b]"><svg class="size-8" viewBox="0 0 32 32"><path d="M0 0h24v7h8v25H0z" fill="#f68b1f"/><path d="M26 0l6 6h-6z" fill="#f68b1f"/><path d="M16 7l12 12-12 10L4 17z" fill="#fff" opacity=".18"/><path d="M24 6C13 2 6 7 7 15c2 9 15 10 17-1-3 4-10 5-11 0 0-5 8-5 11-8z" fill="#fff"/><text x="16" y="30" text-anchor="middle" font-family="Noto Sans, sans-serif" font-size="7" font-weight="700" fill="#fff">PDF</text></svg></button>
  <div class="ml-auto flex h-full items-center">
    <button aria-label="Show hidden icons" class="mr-[17px]"><svg class="h-[4px] w-[8px]" viewBox="0 0 8 4"><path d="M0 4h8L4 0z" fill="#e8eef5"/></svg></button>
    <svg class="mr-[12px] size-[12px]" viewBox="0 0 12 12"><circle cx="6" cy="6" r="5.500" fill="#3cc41c"/><circle cx="6" cy="4" r="3" fill="#8cf26c"/></svg>
    <svg class="mr-[9px] size-[15px]" viewBox="0 0 15 15"><path d="M0 5h3l4-4v13l-4-4H0z" fill="#fff"/><circle cx="10.500" cy="10.500" r="4.500" fill="#e02b2b"/><path d="M8.500 8.500l4 4M12.500 8.500l-4 4" stroke="#fff" stroke-width="1.500"/></svg>
    <svg class="mr-[9px] size-[15px]" viewBox="0 0 15 15"><path d="M1 0v15" stroke="#fff" stroke-width="1.500"/><path d="M2 2h6v2h7l-2 4H8V7H2z" fill="#fff"/></svg>
    <svg class="mr-[16px] size-[16px]" viewBox="0 0 16 16"><path d="M5 3h10v8H5M10 11v3M6 14.500h8" fill="none" stroke="#fff" stroke-width="1.500"/><path d="M1 0v5h4V0M3 5v8h4" fill="none" stroke="#fff" stroke-width="1.300"/></svg>
    <time class="w-[60px] text-center leading-[17px]" datetime="2019-04-30T10:35">10:35<br>30/04/2019</time>
    <button aria-label="Show desktop" class="mr-px ml-[11px] h-[38px] w-[13px] border border-[#76828f] bg-linear-to-br from-[#5c6874] to-[#18212c]"></button>
  </div>
</footer>
</body>
</html>
